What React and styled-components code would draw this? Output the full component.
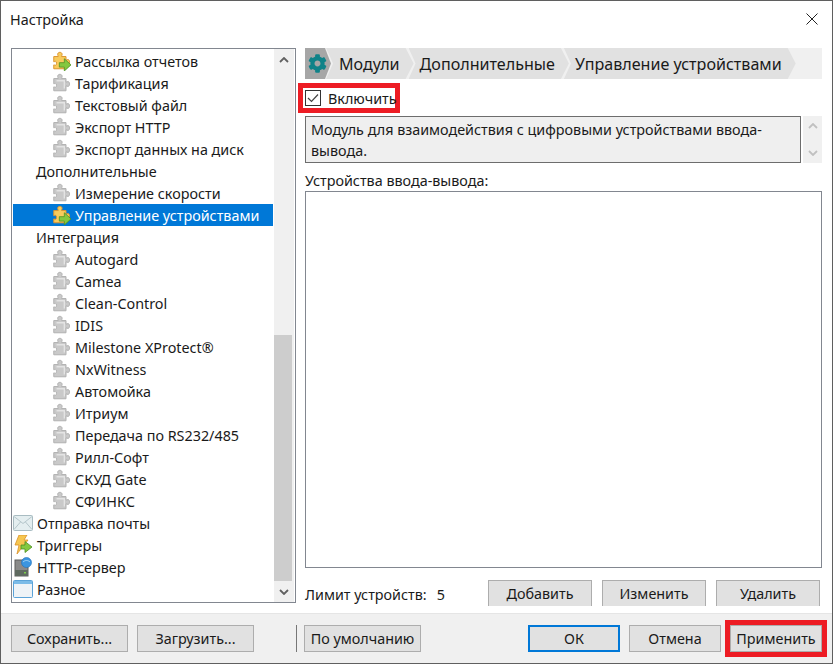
import React from "react"
import styled, { createGlobalStyle } from "styled-components"
import { FaCog } from "react-icons/fa"

const Global = createGlobalStyle`
  html, body { margin: 0; padding: 0; background: #fff; }
  * { box-sizing: border-box; }
`

const treeRows = [
  { text: "Рассылка отчетов", level: 2, icon: "active" },
  { text: "Тарификация", level: 2, icon: "off" },
  { text: "Текстовый файл", level: 2, icon: "off" },
  { text: "Экспорт HTTP", level: 2, icon: "off" },
  { text: "Экспорт данных на диск", level: 2, icon: "off" },
  { text: "Дополнительные", level: 1 },
  { text: "Измерение скорости", level: 2, icon: "off" },
  { text: "Управление устройствами", level: 2, icon: "active", selected: true },
  { text: "Интеграция", level: 1 },
  { text: "Autogard", level: 2, icon: "off" },
  { text: "Camea", level: 2, icon: "off" },
  { text: "Clean-Control", level: 2, icon: "off" },
  { text: "IDIS", level: 2, icon: "off" },
  { text: "Milestone XProtect®", level: 2, icon: "off" },
  { text: "NxWitness", level: 2, icon: "off" },
  { text: "Автомойка", level: 2, icon: "off" },
  { text: "Итриум", level: 2, icon: "off" },
  { text: "Передача по RS232/485", level: 2, icon: "off" },
  { text: "Рилл-Софт", level: 2, icon: "off" },
  { text: "СКУД Gate", level: 2, icon: "off" },
  { text: "СФИНКС", level: 2, icon: "off" },
  { text: "Отправка почты", level: 0, icon: "mail" },
  { text: "Триггеры", level: 0, icon: "bolt" },
  { text: "HTTP-сервер", level: 0, icon: "server" },
  { text: "Разное", level: 0, icon: "window" },
]

const PUZZLE = "M6 3c0-2.400 4-2.400 4 0 0 .8-.5 1.200-.5 2h4v3.200c.9 0 1.100-.5 1.800-.5 1.800 0 1.800 4.400 0 4.400-.7 0-.9-.5-1.800-.5V16H2.500v-3.500c.7 0 1 .4 1.500.4 1.300 0 1.300-3.600 0-3.600-.5 0-.8.400-1.500.4V5h4c0-.8-.5-1.200-.5-2z"

const Puzzle = ({ active }) => (
  <svg width="20" height="20" viewBox="0 0 18 18">
    <path
      d={PUZZLE}
      fill={active ? "#f8cb5c" : "#c9c9c9"}
      stroke={active ? "#dc9530" : "#b2b2b2"}
      strokeWidth="0.900"
    />
    {active ? (
      <path
        d="M7.500 10.500h4.500V7l6 5.500-6 5.500v-3.500H7.500z"
        fill="#84c83f"
        stroke="#4d8f22"
        strokeWidth="0.700"
      />
    ) : (
      <path d="M5 7h7v7" fill="none" stroke="#e4e4e4" strokeWidth="1.200" />
    )}
  </svg>
)

const MailIcon = () => (
  <svg width="20" height="16" viewBox="0 0 20 16">
    <rect x="0.500" y="0.500" width="19" height="15" rx="1" fill="#e4eef0" stroke="#a9bcc2" />
    <path d="M1 1.500l9 7 9-7M1 14.500l6.500-7.500M19 14.500L12.500 7" fill="none" stroke="#b5c6cb" />
  </svg>
)

const BoltIcon = () => (
  <svg width="20" height="20" viewBox="0 0 20 20">
    <path d="M6 0h8l-3 5h4L4 19l2-9H2z" fill="#f6c650" stroke="#d9902a" strokeWidth="0.800" />
    <path d="M8 10h4V6.500l7 5.500-7 5.500V14H8z" fill="#84c83f" stroke="#4d8f22" strokeWidth="0.800" />
  </svg>
)

const ServerIcon = () => (
  <svg width="20" height="20" viewBox="0 0 20 20">
    <rect x="2" y="3" width="13" height="16" fill="#8a8a8a" stroke="#5c5c5c" />
    <rect x="2" y="13" width="13" height="6" fill="#5f6a60" />
    <rect x="11" y="15" width="2" height="1.500" fill="#7bd04a" />
    <circle cx="13.500" cy="5.500" r="5" fill="#3c95e0" stroke="#1f6fb8" strokeWidth="0.600" />
    <path d="M10 5c2-2 5-2 7 0" fill="none" stroke="#a8d6f7" />
  </svg>
)

const WindowIcon = () => (
  <svg width="20" height="18" viewBox="0 0 20 18">
    <rect x="0.500" y="0.500" width="19" height="17" rx="1" fill="#eef3f7" stroke="#5ba3d8" />
    <rect x="1" y="1" width="18" height="3" fill="#7cbce8" />
  </svg>
)

const Chevron = ({ up, color = "#606060" }) => (
  <svg width="10" height="6" viewBox="0 0 10 6">
    <path d={up ? "M1 5l4-4 4 4" : "M1 1l4 4 4-4"} fill="none" stroke={color} strokeWidth="1.800" />
  </svg>
)

const TreeIcon = ({ kind }) => {
  if (kind === "active") return <Puzzle active />
  if (kind === "off") return <Puzzle />
  if (kind === "mail") return <MailIcon />
  if (kind === "bolt") return <BoltIcon />
  if (kind === "server") return <ServerIcon />
  if (kind === "window") return <WindowIcon />
  return null
}

const Window = styled.div`
  width: 833px;
  height: 664px;
  display: flex;
  flex-direction: column;
  background: #fff;
  border: 1px solid #5f5f5f;
  font-family: "Noto Sans", "Open Sans", sans-serif;
  font-size: 14.35px;
  color: #1a1a1a;
  overflow: hidden;
`
const TitleBar = styled.div`
  height: 47px;
  flex: none;
  display: flex;
  align-items: flex-start;
  justify-content: space-between;
  padding: 9px 14px 0 9px;
  line-height: 20px;
`
const CloseButton = styled.div`
  margin-top: 3px;
  line-height: 0;
`
const Body = styled.div`
  flex: 1;
  min-height: 0;
  display: flex;
  padding: 0 10px 0 10px;
`
const Tree = styled.div`
  width: 285px;
  height: 555px;
  flex: none;
  display: flex;
  border: 1px solid #828790;
  padding: 1px 1px 0 1px;
`
const TreeList = styled.div`
  flex: 1;
  min-width: 0;
`
const TreeRow = styled.div`
  height: 22px;
  display: flex;
  align-items: center;
  gap: 4px;
  padding-left: ${(p) => (p.$level === 2 ? 38 : p.$level === 1 ? 23 : 0)}px;
  background: ${(p) => (p.$selected ? "#0078d7" : "transparent")};
  color: ${(p) => (p.$selected ? "#fff" : "#1a1a1a")};
  white-space: nowrap;
`
const IconSlot = styled.span`
  width: 20px;
  height: 20px;
  flex: none;
  display: flex;
  align-items: center;
  justify-content: center;
`
const Scrollbar = styled.div`
  width: 20px;
  flex: none;
  margin: -1px 0 0 1px;
  display: flex;
  flex-direction: column;
  background: #f0f0f0;
`
const ScrollButton = styled.div`
  height: 21px;
  flex: none;
  display: flex;
  align-items: center;
  justify-content: center;
`
const ScrollSpace = styled.div`
  height: 265px;
  flex: none;
`
const ScrollThumb = styled.div`
  flex: 1;
  margin-right: 2px;
  background: #cdcdcd;
`
const Main = styled.div`
  flex: 1;
  min-width: 0;
  margin-left: 9px;
  display: flex;
  flex-direction: column;
  height: 558px;
`
const Crumbs = styled.div`
  height: 31px;
  flex: none;
  display: flex;
  background: #f0f0f0;
`
const Crumb = styled.div`
  display: flex;
  align-items: center;
  height: 100%;
  margin-right: -5px;
  padding: 0 14px 0 ${(p) => p.$pl ?? 11}px;
  background: #e1e1e1;
  font-size: 16.1px;
  white-space: nowrap;
  clip-path: polygon(0 0, calc(100% - 8px) 0, 100% 50%, calc(100% - 8px) 100%, 0 100%, 7px 50%);
`
const GearCrumb = styled(Crumb)`
  width: 26px;
  padding: 0 0 0 3px;
  background: #a6a6a6;
  color: #0f8288;
  font-size: 19px;
  clip-path: polygon(0 0, calc(100% - 6px) 0, 100% 50%, calc(100% - 6px) 100%, 0 100%);
`
const EnableRow = styled.label`
  width: 102px;
  height: 30px;
  margin: 4px 0 3px -7px;
  flex: none;
  display: flex;
  align-items: center;
  gap: 7px;
  padding-left: 2px;
  border: 5px solid #ed1c24;
  white-space: nowrap;
`
const CheckBox = styled.span`
  width: 16px;
  height: 16px;
  flex: none;
  border: 1px solid #333;
  display: flex;
  align-items: center;
  justify-content: center;
  background: #fff;
`
const DescRow = styled.div`
  height: 47px;
  flex: none;
  display: flex;
  gap: 2px;
`
const DescBox = styled.div`
  flex: 1;
  min-width: 0;
  padding: 2px 5px;
  background: #efefef;
  border: 1px solid #6d6d6d;
  line-height: 21px;
`
const DescScroll = styled.div`
  width: 19px;
  flex: none;
  background: #f0f0f0;
  display: flex;
  flex-direction: column;
  justify-content: space-between;
  padding: 7px 0 7px;
  align-items: center;
`
const ListLabel = styled.div`
  height: 28px;
  flex: none;
  display: flex;
  align-items: flex-end;
  line-height: 20px;
`
const DeviceList = styled.div`
  flex: 1;
  min-height: 0;
  border: 1px solid #828790;
  background: #fff;
`
const ActionRow = styled.div`
  height: 38px;
  flex: none;
  display: flex;
  align-items: flex-end;
  justify-content: space-between;
`
const Limit = styled.div`
  display: flex;
  gap: 10px;
  padding-bottom: 1px;
  line-height: 20px;
`
const ActionButtons = styled.div`
  display: flex;
  gap: 10px;
  margin-right: 2px;
`
const Button = styled.button`
  width: ${(p) => p.$w}px;
  height: 27px;
  flex: none;
  padding: 0;
  background: #e1e1e1;
  border: 1px solid #adadad;
  font: inherit;
  color: inherit;
`
const CutButton = styled(Button)`
  height: 26px;
  border-bottom: 0;
`
const OkButton = styled(Button)`
  border: 2px solid #0078d7;
`
const ApplyButton = styled(Button)`
  outline: 5px solid #ed1c24;
`
const Footer = styled.div`
  height: 50px;
  margin-top: 7px;
  flex: none;
  display: flex;
  align-items: flex-start;
  padding: 11px 10px 0;
  background: #f0f0f0;
  border-top: 1px solid #e5e5e5;
`
const FooterGroup = styled.div`
  display: flex;
  gap: 9px;
  margin-left: ${(p) => p.$ml ?? 0}px;
`
const Separator = styled.div`
  width: 1px;
  height: 27px;
  margin: 0 7px 0 42px;
  background: #777;
`

export default function App() {
  return (
    <>
      <Global />
      <Window>
        <TitleBar>
          <span>Настройка</span>
          <CloseButton>
            <svg width="12" height="12" viewBox="0 0 12 12">
              <path d="M0.500 0.500l11 11M11.500 0.500l-11 11" stroke="#222" strokeWidth="1" />
            </svg>
          </CloseButton>
        </TitleBar>
        <Body>
          <Tree>
            <TreeList>
              {treeRows.map((row) => (
                <TreeRow key={row.text} $level={row.level} $selected={row.selected}>
                  {row.icon && (
                    <IconSlot>
                      <TreeIcon kind={row.icon} />
                    </IconSlot>
                  )}
                  <span>{row.text}</span>
                </TreeRow>
              ))}
            </TreeList>
            <Scrollbar>
              <ScrollButton><Chevron up /></ScrollButton>
              <ScrollSpace />
              <ScrollThumb />
              <ScrollButton><Chevron /></ScrollButton>
            </Scrollbar>
          </Tree>
          <Main>
            <Crumbs>
              <GearCrumb><FaCog /></GearCrumb>
              <Crumb $pl={13}>Модули</Crumb>
              <Crumb>Дополнительные</Crumb>
              <Crumb>Управление устройствами</Crumb>
            </Crumbs>
            <EnableRow>
              <CheckBox>
                <svg width="12" height="10" viewBox="0 0 12 10">
                  <path d="M1 5l3.500 3.500L11 1.500" fill="none" stroke="#444" strokeWidth="1.200" />
                </svg>
              </CheckBox>
              Включить
            </EnableRow>
            <DescRow>
              <DescBox>Модуль для взаимодействия с цифровыми устройствами ввода-вывода.</DescBox>
              <DescScroll>
                <Chevron up color="#c0c0c0" />
                <Chevron color="#c0c0c0" />
              </DescScroll>
            </DescRow>
            <ListLabel>Устройства ввода-вывода:</ListLabel>
            <DeviceList />
            <ActionRow>
              <Limit>
                <span>Лимит устройств:</span>
                <span>5</span>
              </Limit>
              <ActionButtons>
                <CutButton $w={104}>Добавить</CutButton>
                <CutButton $w={104}>Изменить</CutButton>
                <CutButton $w={104}>Удалить</CutButton>
              </ActionButtons>
            </ActionRow>
          </Main>
        </Body>
        <Footer>
          <FooterGroup>
            <Button $w={117}>Сохранить...</Button>
            <Button $w={117}>Загрузить...</Button>
          </FooterGroup>
          <Separator />
          <Button $w={117}>По умолчанию</Button>
          <FooterGroup $ml={107}>
            <OkButton $w={92}>ОК</OkButton>
            <Button $w={92}>Отмена</Button>
            <ApplyButton $w={92}>Применить</ApplyButton>
          </FooterGroup>
        </Footer>
      </Window>
    </>
  )
}
